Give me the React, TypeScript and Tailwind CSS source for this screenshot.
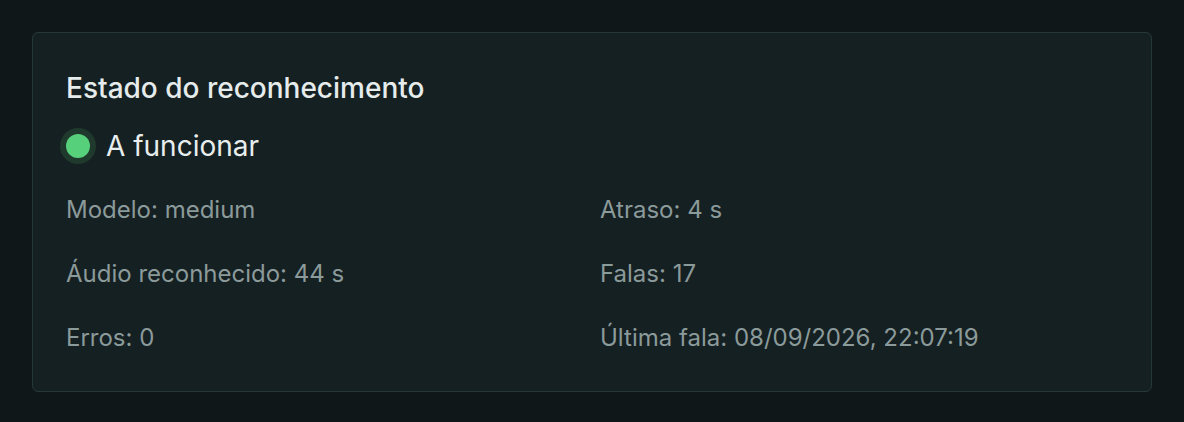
import React from "react";

const stats: { label: string; value: string }[] = [
  { label: "Modelo", value: "medium" },
  { label: "Atraso", value: "4 s" },
  { label: "Áudio reconhecido", value: "44 s" },
  { label: "Falas", value: "17" },
  { label: "Erros", value: "0" },
  { label: "Última fala", value: "08/09/2026, 22:07:19" },
];

export default function App() {
  return (
    <div
      className="min-h-screen bg-[#0f1719] p-8"
      style={{ fontFamily: "Inter, 'Noto Sans', sans-serif" }}
    >
      <div className="rounded-md border border-[#253737] bg-[#152022] px-[33px] pt-[37px] pb-[37px]">
        {/* cabeçalho */}
        <h2 className="text-[28px] leading-[36px] font-medium text-[#e6ecec]">
          Estado do reconhecimento
        </h2>

        <div className="mt-[22px] flex items-center gap-[16px] h-[36px]">
          <span className="h-[24px] w-[24px] shrink-0 rounded-full bg-[#57d07c] ring-[6px] ring-[#1f3a2c]" />
          <span className="text-[28px] leading-[36px] text-[#e8eeee]">A funcionar</span>
        </div>

        <div className="mt-[30px] grid grid-cols-2 gap-x-4 gap-y-[32px]">
          {stats.map((s, i) => (
            <p key={i} className="text-[24px] leading-[32px] text-[#8b9a9a]">
              {s.label}: {s.value}
            </p>
          ))}
        </div>
      </div>
    </div>
  );
}
